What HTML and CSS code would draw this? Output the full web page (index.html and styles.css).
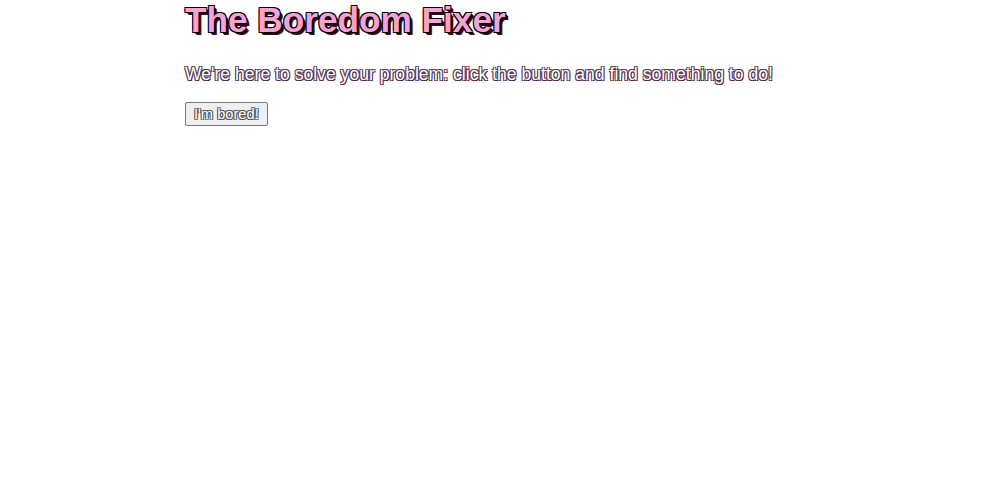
FILE: index.html
```html
<!DOCTYPE html>
<html>
<head>
<meta charset="utf-8">
<title>The Boredom Fixer</title>
<link rel="stylesheet" href="styles.css">
</head>
<body>
<main class="page">
  <h1 class="title">The Boredom Fixer</h1>
  <p class="intro">We're here to solve your problem: click the button and find something to do!</p>
  <button class="bored-btn" type="button">I'm bored!</button>
</main>
</body>
</html>
```
FILE: styles.css
```css
html, body {
  margin: 0;
  padding: 0;
  background: #fff;
}
.page {
  width: 618px;
  margin: 0 auto;
  font-family: "Liberation Sans", Arial, sans-serif;
}
.title {
  margin: 0 0 24px;
  font-weight: bold;
  font-size: 35.2px;
  line-height: 40px;
  color: #f4a3d6;
  text-shadow: -1px -1px 0 #000, 1px -1px 0 #000, -1px 1px 0 #000, 1px 1px 0 #000, 2px 2px 0 #2a0010, 3px 3px 0 #3a1020;
}
.intro {
  margin: 0 0 17px;
  font-size: 17.6px;
  line-height: 21px;
  color: #fff;
  text-shadow: -1px -1px 0 #5a3555, 1px -1px 0 #5a3555, -1px 1px 0 #5a3555, 1px 1px 0 #3a1535;
}
.bored-btn {
  font-family: "Liberation Sans", Arial, sans-serif;
  font-size: 14.67px;
  padding: 3px 8px;
  color: #fff;
  background: #efefef;
  border: 1px solid #767676;
  border-radius: 2px;
  text-shadow: -1px -1px 0 #555, 1px -1px 0 #555, -1px 1px 0 #555, 1px 1px 0 #555;
}
```
